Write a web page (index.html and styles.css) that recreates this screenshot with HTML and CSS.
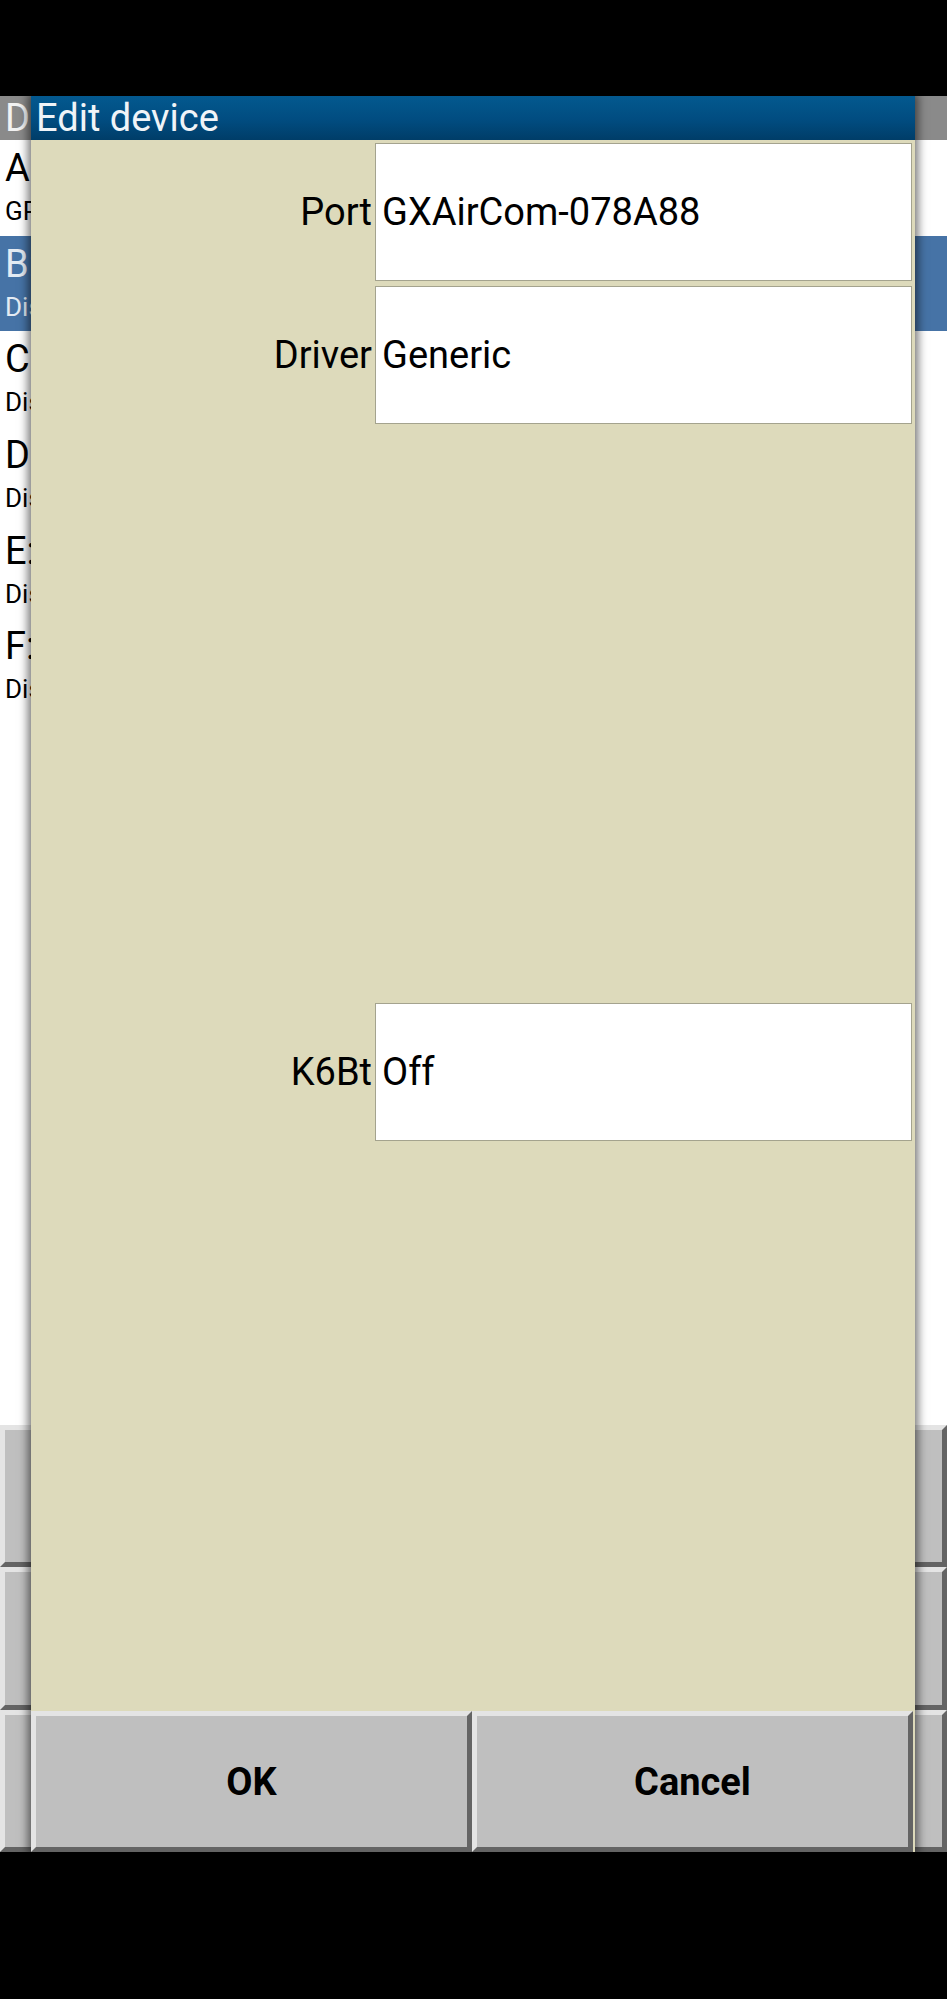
FILE: index.html
```html
<!DOCTYPE html>
<html lang="en">
<head>
<meta charset="utf-8">
<title>Edit device</title>
<link rel="stylesheet" href="styles.css">
</head>
<body>
<div class="screen">
  <div class="statusbar"></div>
  <div class="app">
    <div class="bg-title"><span class="clip">Devices</span></div>
    <ul class="dev-list">
      <li class="dev"><span class="dev-name clip">A: GXAirCom-078A88</span><span class="dev-status clip">GPS fix, Baro, Vario</span></li>
      <li class="dev selected"><span class="dev-name clip">B: Disabled</span><span class="dev-status clip">Disabled</span></li>
      <li class="dev"><span class="dev-name clip">C: Disabled</span><span class="dev-status clip">Disabled</span></li>
      <li class="dev"><span class="dev-name clip">D: Disabled</span><span class="dev-status clip">Disabled</span></li>
      <li class="dev"><span class="dev-name clip">E: Disabled</span><span class="dev-status clip">Disabled</span></li>
      <li class="dev"><span class="dev-name clip">F: Disabled</span><span class="dev-status clip">Disabled</span></li>
    </ul>
    <div class="bg-buttons">
      <div class="bg-btn"></div>
      <div class="bg-btn"></div>
      <div class="bg-btn"></div>
    </div>

    <div class="dialog">
      <div class="dlg-title">Edit device</div>
      <div class="dlg-body">
        <div class="fields">
          <div class="field"><span class="field-label">Port</span><div class="field-box">GXAirCom-078A88</div></div>
          <div class="field"><span class="field-label">Driver</span><div class="field-box">Generic</div></div>
          <div class="field hidden"><span class="field-label">Baud rate</span><div class="field-box">4800</div></div>
          <div class="field hidden"><span class="field-label">Bulk baud rate</span><div class="field-box">Default</div></div>
          <div class="field hidden"><span class="field-label">Sync. from device</span><div class="field-box">Off</div></div>
          <div class="field hidden"><span class="field-label">Sync. to device</span><div class="field-box">Off</div></div>
          <div class="field"><span class="field-label">K6Bt</span><div class="field-box">Off</div></div>
        </div>
        <div class="dlg-buttons">
          <div class="btn">OK</div>
          <div class="btn">Cancel</div>
        </div>
      </div>
    </div>
  </div>
  <div class="navbar"></div>
</div>
</body>
</html>
```
FILE: styles.css
```css
* { box-sizing: border-box; }

html, body {
  margin: 0;
  padding: 0;
  background: #000;
}

body {
  font-family: Roboto, "Noto Sans", "Liberation Sans", sans-serif;
  color: #000;
}

.screen {
  width: 947px;
  height: 1999px;
  display: flex;
  flex-direction: column;
  overflow: hidden;
}

.statusbar {
  height: 96px;
  flex: none;
  background: #000;
}

.navbar {
  flex: 1;
  background: #000;
}

.app {
  position: relative;
  height: 1756px;
  flex: none;
  display: flex;
  flex-direction: column;
  background: #fff;
}

/* background window (device list), mostly hidden behind the dialog */
.clip {
  display: block;
  width: 26px;
  overflow: hidden;
  white-space: nowrap;
}

.bg-title {
  height: 44px;
  flex: none;
  background: #8a8a8a;
  color: #f2f2f2;
  font-size: 38px;
  line-height: 44px;
  padding-left: 5px;
}

.dev-list {
  list-style: none;
  margin: 0;
  padding: 0;
  flex: 1;
}

.dev {
  height: 95.7px;
  display: flex;
  flex-direction: column;
  padding: 8px 0 0 5px;
}

.dev-name {
  font-size: 38px;
  line-height: 40px;
}

.dev-status {
  font-size: 26px;
  line-height: 28px;
  margin-top: 9px;
}

.dev.selected {
  background: #4673a6;
  color: #e4ebf3;
}

.bg-buttons {
  height: 427px;
  flex: none;
  display: grid;
  grid-template-rows: repeat(3, 1fr);
}

.bg-btn {
  background: #bfbfbf;
  border: 5px solid;
  border-color: #e4e4e4 #646464 #646464 #e4e4e4;
}

/* dialog */
.dialog {
  position: absolute;
  left: 31px;
  top: 0;
  width: 884px;
  height: 100%;
  display: flex;
  flex-direction: column;
  box-shadow: 0 0 9px 3px rgba(0, 0, 0, 0.55);
}

.dlg-title {
  height: 44px;
  flex: none;
  background: linear-gradient(#03598f, #014c80 55%, #003d68);
  color: #f0f4f8;
  font-size: 38px;
  line-height: 44px;
  padding-left: 5px;
}

.dlg-body {
  flex: 1;
  display: flex;
  flex-direction: column;
  background: #dddabb;
}

.fields {
  flex: 1;
  display: flex;
  flex-direction: column;
  gap: 5.3px;
  padding: 3px 3px 0 0;
}

.field {
  height: 138px;
  flex: none;
  display: flex;
  align-items: center;
}

.field.hidden {
  visibility: hidden;
}

.field-label {
  width: 344px;
  flex: none;
  padding-right: 3px;
  text-align: right;
  font-size: 38px;
  white-space: nowrap;
}

.field-box {
  flex: 1;
  height: 100%;
  background: #fff;
  border: 1px solid #a4a38e;
  display: flex;
  align-items: center;
  padding-left: 6px;
  font-size: 38px;
  white-space: nowrap;
}

.dlg-buttons {
  height: 141px;
  flex: none;
  display: flex;
  padding-right: 2px;
}

.btn {
  flex: 1;
  background: #bfbfbf;
  border: 5px solid;
  border-color: #e4e4e4 #646464 #646464 #e4e4e4;
  font-weight: bold;
  font-size: 38px;
  display: flex;
  align-items: center;
  justify-content: center;
}
```
